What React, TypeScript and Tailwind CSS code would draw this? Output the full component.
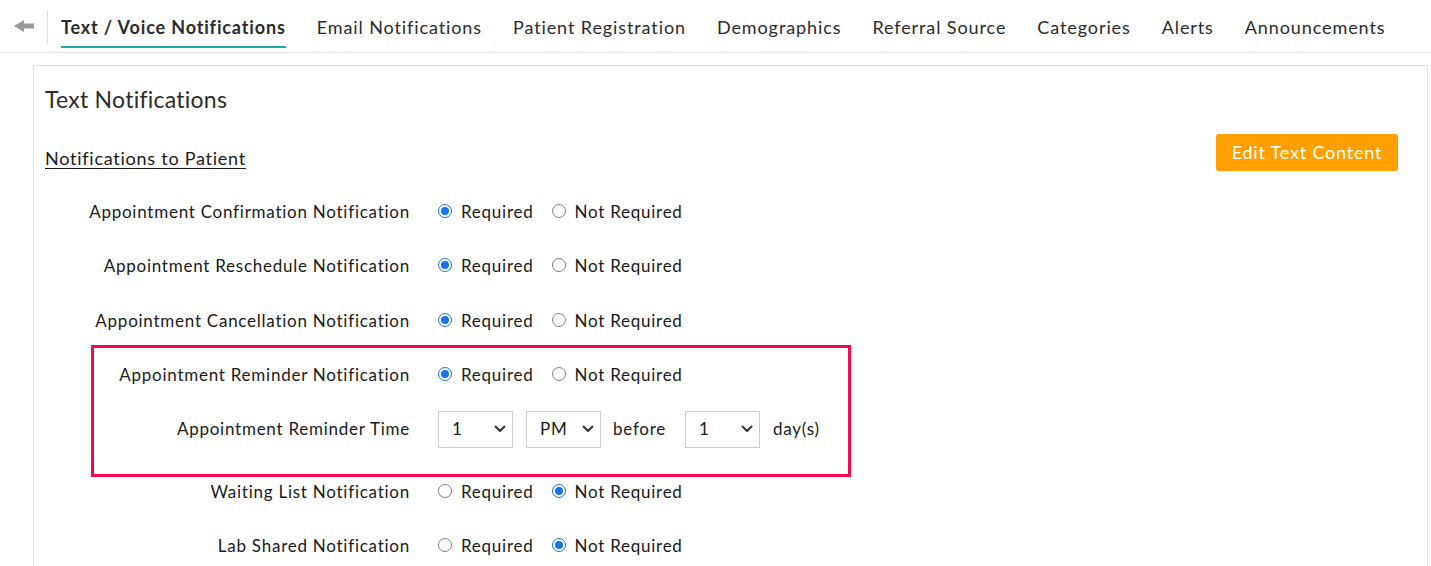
import React from "react";

const font = { fontFamily: "Lato, 'Open Sans', sans-serif" };

function Radio({ checked }: { checked: boolean }) {
  return checked ? (
    <span className="inline-flex h-[14px] w-[14px] items-center justify-center rounded-full border-[1.5px] border-[#1a73e8] bg-white">
      <span className="h-[8px] w-[8px] rounded-full bg-[#1a73e8]" />
    </span>
  ) : (
    <span className="inline-block h-[14px] w-[14px] rounded-full border border-[#808080] bg-white" />
  );
}

function RadioGroup({ required }: { required: boolean }) {
  return (
    <div className="ml-[28px] flex items-center text-[17px] tracking-[0.75px] text-[#1a1a1a]">
      <span className="-mt-[3px] flex">
        <Radio checked={required} />
      </span>
      <span className="ml-[9px]">Required</span>
      <span className="-mt-[3px] ml-[18px] flex">
        <Radio checked={!required} />
      </span>
      <span className="ml-[9px]">Not Required</span>
    </div>
  );
}

function Chevron() {
  return (
    <svg width="12" height="8" viewBox="0 0 12 8" fill="none" stroke="#333" strokeWidth="2" strokeLinecap="round" strokeLinejoin="round">
      <path d="M1.5 1.5l4.5 4.5 4.5-4.5" />
    </svg>
  );
}

function Select({ value }: { value: string }) {
  return (
    <div className="flex h-[37px] w-[75px] items-center justify-between border border-[#cccccc] bg-white pl-[13px] pr-[6px] text-[17px] tracking-[0.75px] text-[#1a1a1a]">
      <span>{value}</span>
      <Chevron />
    </div>
  );
}

function Row({
  label,
  required,
  labelW,
  h,
  extra,
}: {
  label: string;
  required: boolean;
  labelW: string;
  h: string;
  extra?: string;
}) {
  return (
    <div className={`flex items-center ${h} ${extra ?? ""}`}>
      <div className={`${labelW} text-right text-[17px] tracking-[0.75px] text-[#1a1a1a]`}>{label}</div>
      <RadioGroup required={required} />
    </div>
  );
}

const tabs = [
  "Email Notifications",
  "Patient Registration",
  "Demographics",
  "Referral Source",
  "Categories",
  "Alerts",
  "Announcements",
];

export default function App() {
  return (
    <div className="h-[566px] w-[1431px] overflow-hidden bg-white" style={font}>
      {/* Tab bar */}
      <div className="flex h-[53px] items-center border-b border-[#e3e3e3]">
        <div className="ml-[14px] flex h-[33px] w-[34px] items-center border-r border-[#dddddd]">
          <svg width="20" height="12" viewBox="0 0 20 12">
            <path d="M0 6 L10 0 L10 3.5 L20 3.5 L20 8.5 L10 8.5 L10 12 Z" fill="#9a9a9a" />
          </svg>
        </div>
        <div className="ml-[13px] flex h-full items-stretch pt-[2px]">
          <div className="relative flex items-center text-[18px] font-bold tracking-[0.85px] text-[#2b2b2b]">
            Text / Voice Notifications
            <span className="absolute bottom-[4px] left-0 right-0 h-[2.5px] bg-[#1ba8a8]" />
          </div>
          {tabs.map((t) => (
            <div key={t} className="ml-[31px] flex items-center text-[18px] tracking-[0.9px] text-[#2b2b2b]">
              {t}
            </div>
          ))}
        </div>
      </div>

      {/* Panel */}
      <div className="ml-[33px] mr-[3px] mt-[12px] h-[600px] border border-[#e3e3e3] px-[11px]">
        <div className="mt-[18px] text-[23px] leading-[30px] tracking-[0.25px] text-[#2b2b2b]">Text Notifications</div>
        <div className="mt-[20px] flex items-start justify-between">
          <div className="mt-[12px] text-[18px] leading-[24px] tracking-[0.75px] text-[#1a1a1a] underline underline-offset-[3px]">
            Notifications to Patient
          </div>
          <button className="mr-[18px] h-[37px] w-[182px] rounded-[3px] bg-[#ffa000] text-[18px] tracking-[0.8px] text-white">
            Edit Text Content
          </button>
        </div>

        <div className="mt-[14px]">
          <Row label="Appointment Confirmation Notification" required labelW="w-[365px]" h="h-[54px]" />
          <Row label="Appointment Reschedule Notification" required labelW="w-[365px]" h="h-[54px]" />
          <Row label="Appointment Cancellation Notification" required labelW="w-[365px]" h="h-[54px]" extra="pt-[2px]" />
          <div className="ml-[46px] mt-[-2px] w-[760px] border-[3px] border-[#f5084f] pb-[18px]">
            <Row label="Appointment Reminder Notification" required labelW="w-[316px]" h="h-[54px]" />
            <div className="flex h-[54px] items-center">
              <div className="w-[316px] text-right text-[17px] tracking-[0.75px] text-[#1a1a1a]">Appointment Reminder Time</div>
              <div className="ml-[28px] flex items-center text-[17px] tracking-[0.75px] text-[#1a1a1a]">
                <Select value="1" />
                <div className="ml-[13px]">
                  <Select value="PM" />
                </div>
                <span className="ml-[12px]">before</span>
                <div className="ml-[19px]">
                  <Select value="1" />
                </div>
                <span className="ml-[13px]">day(s)</span>
              </div>
            </div>
          </div>
          <Row label="Waiting List Notification" required={false} labelW="w-[365px]" h="h-[30px]" />
          <Row label="Lab Shared Notification" required={false} labelW="w-[365px]" h="h-[30px]" extra="mt-[24px]" />
        </div>
      </div>
    </div>
  );
}
